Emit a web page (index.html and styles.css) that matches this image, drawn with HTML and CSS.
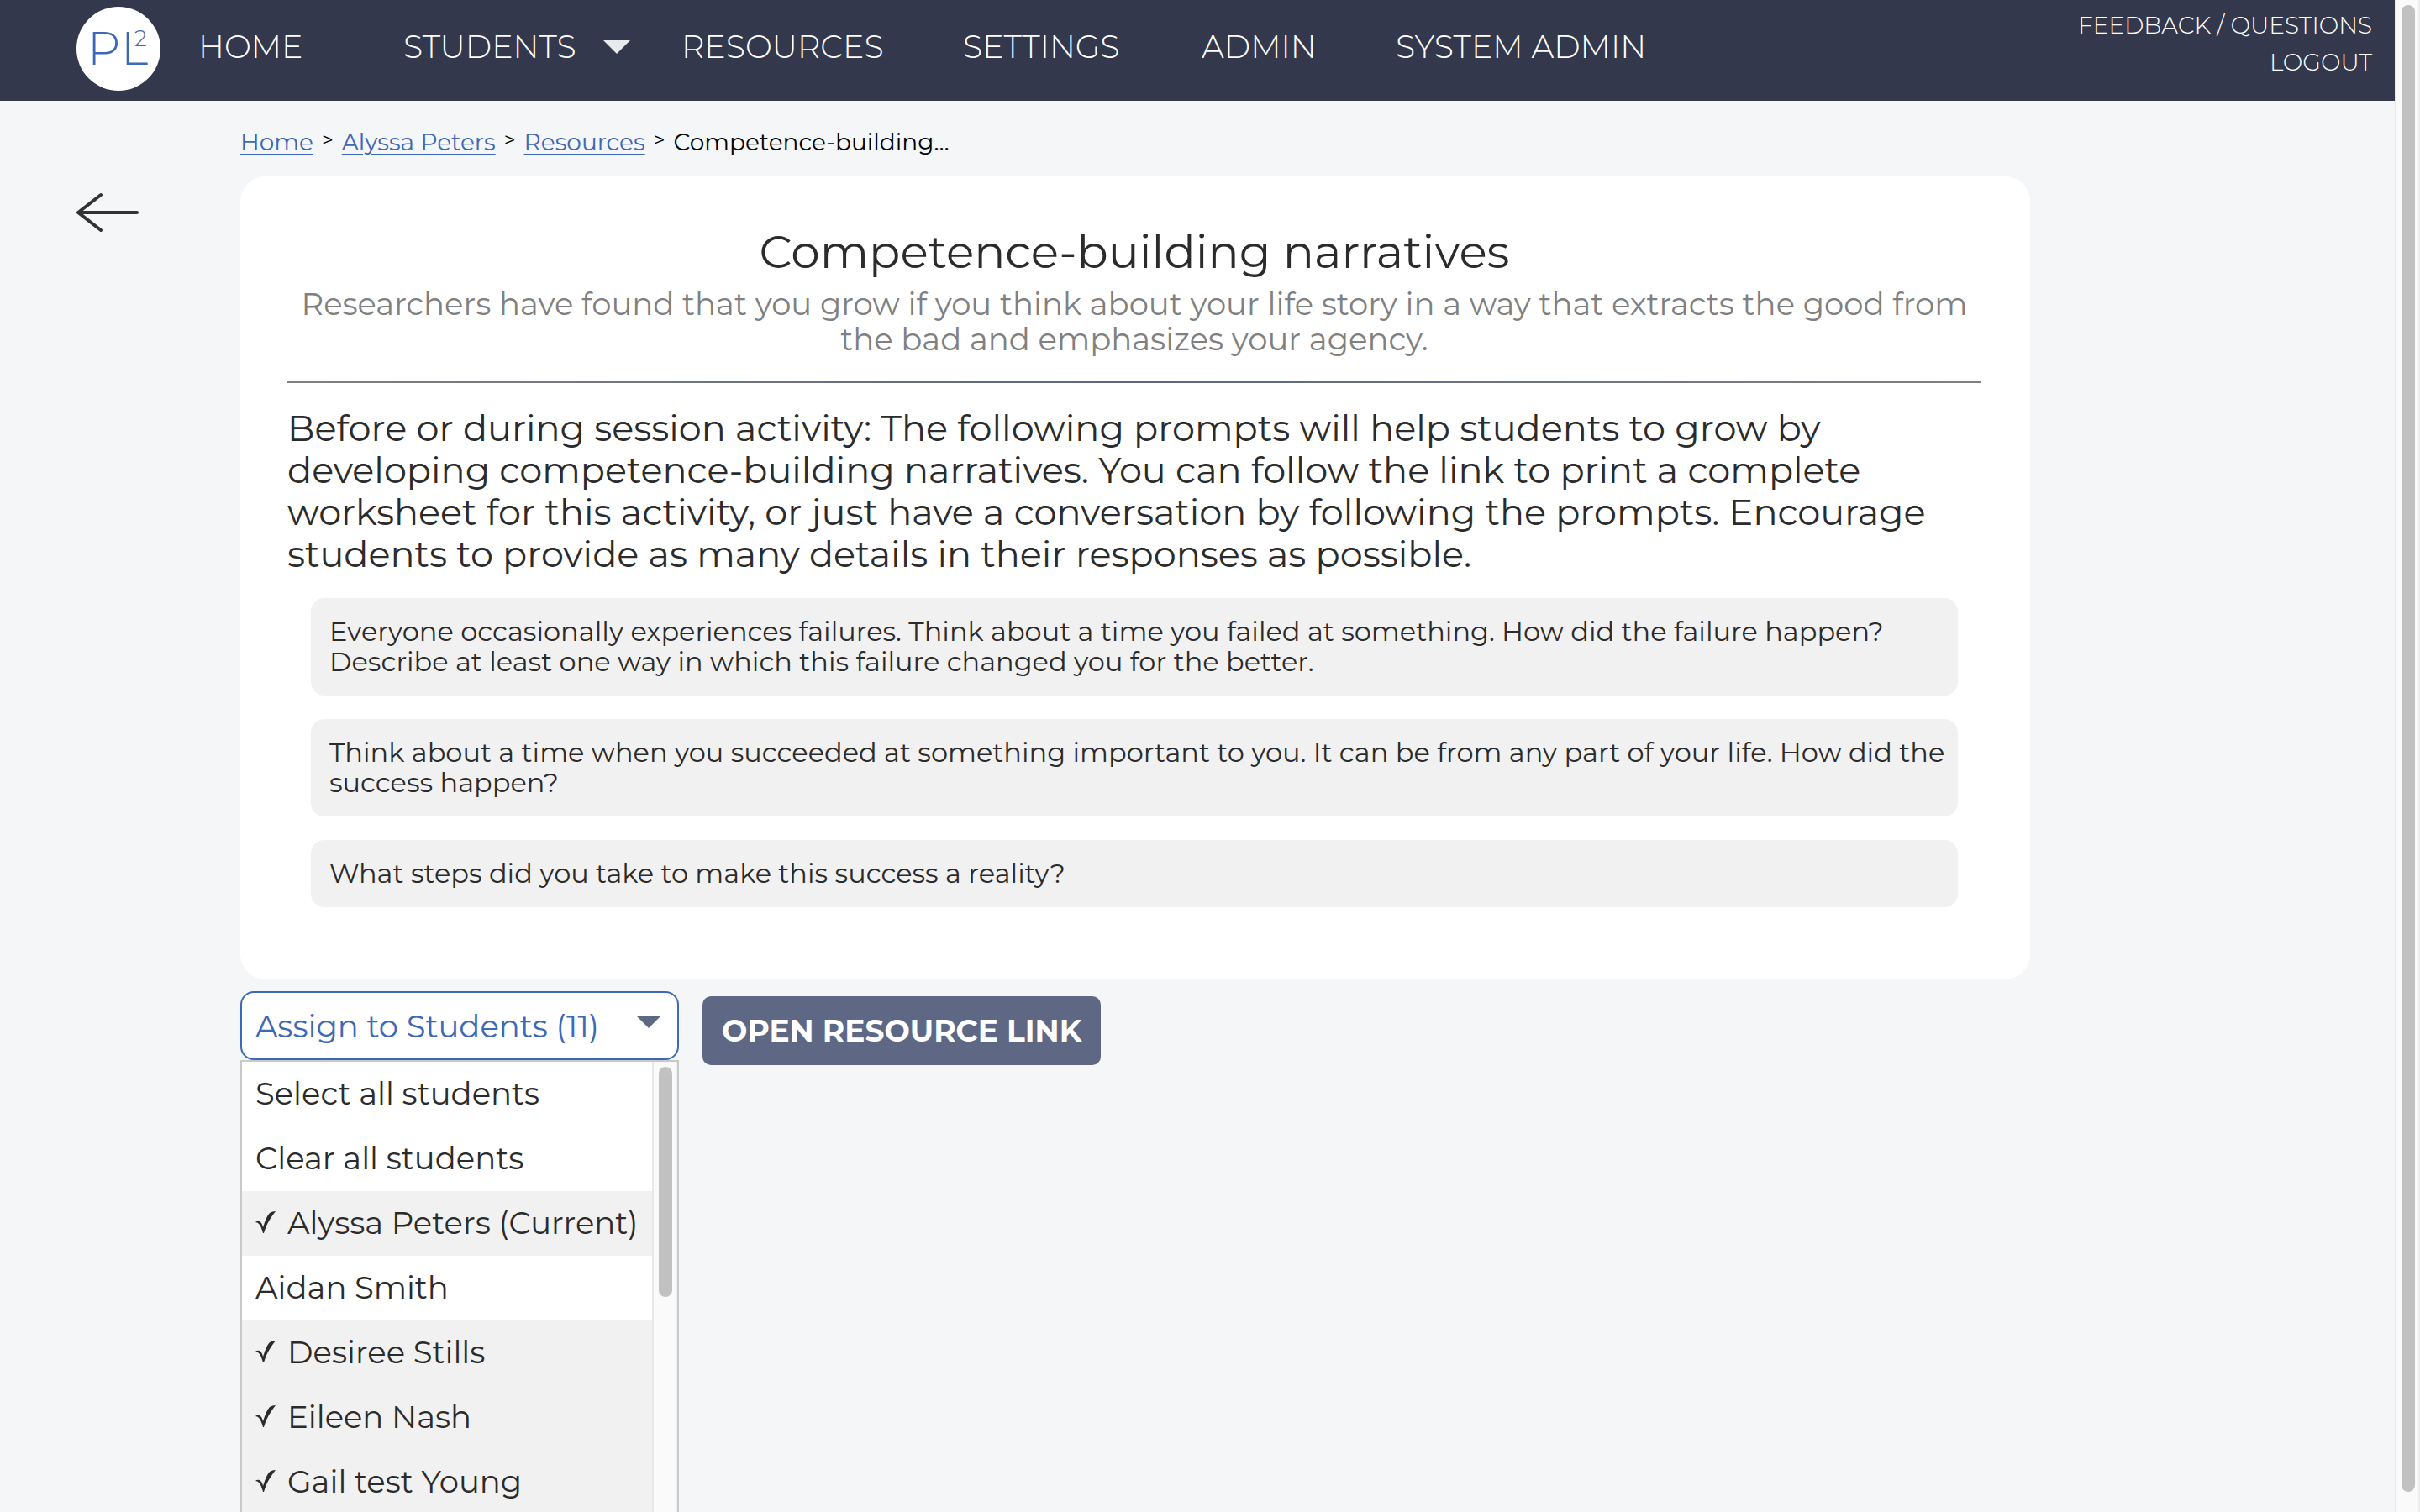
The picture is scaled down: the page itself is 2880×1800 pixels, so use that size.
FILE: index.html
```
<!DOCTYPE html>
<html lang="en">
<head>
<meta charset="utf-8">
<title>Competence-building narratives</title>
<link rel="stylesheet" href="styles.css">
</head>
<body>
<div class="page">
  <header class="topbar">
    <a class="logo" href="#" aria-label="PL2 home">
      <svg viewBox="0 0 100 100" width="100" height="100">
        <circle cx="50" cy="50" r="50" fill="#fff"/>
        <text class="logo-text" y="69"><tspan x="13">P</tspan><tspan x="53">L</tspan></text>
        <text class="logo-sup" x="69" y="47">2</text>
      </svg>
    </a>
    <nav class="nav">
      <a href="#">HOME</a>
      <a class="has-menu" href="#">STUDENTS
        <svg width="32" height="16" viewBox="0 0 32 16"><path d="M0 0h32L16 16z" fill="#e9eaec"/></svg>
      </a>
      <a href="#">RESOURCES</a>
      <a href="#">SETTINGS</a>
      <a href="#">ADMIN</a>
      <a href="#">SYSTEM ADMIN</a>
    </nav>
    <div class="account">
      <a href="#">FEEDBACK / QUESTIONS</a>
      <a href="#">LOGOUT</a>
    </div>
  </header>

  <main class="layout">
    <nav class="crumbs" aria-label="Breadcrumb">
      <a href="#">Home</a><span class="sep">&gt;</span>
      <a href="#">Alyssa Peters</a><span class="sep">&gt;</span>
      <a href="#">Resources</a><span class="sep">&gt;</span>
      <span>Competence-building…</span>
    </nav>
    <a class="back" href="#" aria-label="Back">
      <svg width="76" height="48" viewBox="0 0 76 48" fill="none" stroke="#333" stroke-width="4" stroke-linecap="round" stroke-linejoin="round"><path d="M72 24H2M29 3L2 24l27 21"/></svg>
    </a>
    <article class="card">
      <h1 class="title">Competence-building narratives</h1>
      <p class="summary">Researchers have found that you grow if you think about your life story in a way that extracts the good from the bad and emphasizes your agency.</p>
      <hr class="rule">
      <p class="intro">Before or during session activity: The following prompts will help students to grow by developing competence-building narratives. You can follow the link to print a complete worksheet for this activity, or just have a conversation by following the prompts. Encourage students to provide as many details in their responses as possible.</p>
      <div class="prompts">
        <p class="prompt">Everyone occasionally experiences failures. Think about a time you failed at something. How did the failure happen? Describe at least one way in which this failure changed you for the better.</p>
        <p class="prompt">Think about a time when you succeeded at something important to you. It can be from any part of your life. How did the success happen?</p>
        <p class="prompt">What steps did you take to make this success a reality?</p>
      </div>
    </article>
    <div class="actions">
      <div class="assign">
        <button class="assign-toggle" type="button" aria-expanded="true">Assign to Students (11)
          <svg width="28" height="14" viewBox="0 0 28 14"><path d="M0 0h28L14 14z" fill="#5e6884"/></svg>
        </button>
        <div class="menu">
          <div class="options">
            <button class="option" type="button">Select all students</button>
            <button class="option" type="button">Clear all students</button>
            <label class="option"><input class="tick" type="checkbox" checked>Alyssa Peters (Current)</label>
            <label class="option"><input class="tick" type="checkbox">Aidan Smith</label>
            <label class="option"><input class="tick" type="checkbox" checked>Desiree Stills</label>
            <label class="option"><input class="tick" type="checkbox" checked>Eileen Nash</label>
            <label class="option"><input class="tick" type="checkbox" checked>Gail test Young</label>
          </div>
          <div class="track menu-track"><div class="thumb"></div></div>
        </div>
      </div>
      <button class="open-link" type="button">OPEN RESOURCE LINK</button>
    </div>
  </main>
</div>
<div class="track page-track"><div class="thumb"></div></div>
</body>
</html>
```
FILE: styles.css
```
* { box-sizing: border-box; }

body {
  margin: 0;
  display: grid;
  grid-template-columns: minmax(0, 1fr) 30px;
  height: 100vh;
  overflow: hidden;
  background: #f4f6f8;
  color: #2b2b2b;
  font-family: Montserrat, Inter, sans-serif;
  font-size: 37px;
}

h1, p { margin: 0; font-weight: 400; }
button, input { font: inherit; color: inherit; margin: 0; }
svg { display: block; flex: none; }

/* Top bar */
.topbar {
  display: flex;
  align-items: flex-start;
  height: 120px;
  padding: 8px 27px 0 91px;
  background: #33384c;
}
.topbar a { color: #fff; text-decoration: none; }
.logo-text { font-size: 55px; font-weight: 300; fill: #3d68b8; }
.logo-sup { font-size: 26px; font-weight: 300; fill: #3d68b8; }
.nav {
  flex: 1;
  display: grid;
  grid-template-columns: 244px 331px 335px 284px 231px auto;
  margin-left: 45px;
  font-size: 38px;
  font-weight: 300;
  line-height: 96px;
  white-space: nowrap;
}
.has-menu { display: flex; align-items: center; gap: 32px; }
.account {
  display: flex;
  flex-direction: column;
  align-items: flex-end;
  font-size: 28px;
  font-weight: 300;
  line-height: 44px;
}

/* Content area */
.layout {
  display: grid;
  grid-template-columns: 286px minmax(0, 1fr) 434px;
}
.crumbs {
  grid-column: 2;
  display: flex;
  gap: 10px;
  padding: 27px 0 19px;
  font-size: 28px;
  line-height: 44px;
  color: #000;
}
.crumbs a {
  color: #3d68b8;
  text-decoration-thickness: 2px;
  text-underline-offset: 4px;
}
.sep { font-size: 24px; line-height: 40px; }
.back { grid-column: 1; padding: 19px 0 0 91px; }
.card {
  grid-column: 2;
  padding: 55px 58px 86px 56px;
  border-radius: 30px;
  background: #fff;
}
.title { font-size: 55px; line-height: 70px; text-align: center; }
.summary { padding-top: 6px; line-height: 42px; text-align: center; color: #808080; }
.rule {
  height: 2px;
  margin: 29px 0;
  border: 0;
  background: linear-gradient(90deg, #808080, #5e6884, #808080);
}
.intro { font-size: 43px; line-height: 50px; }
.prompts { display: grid; gap: 28px; padding: 27px 28px 0; }
.prompt {
  padding: 22px 0 22px 22px;
  border-radius: 16px;
  background: #f1f1f1;
  font-size: 32px;
  line-height: 36px;
}

/* Actions */
.actions {
  grid-column: 2;
  display: flex;
  gap: 28px;
  padding-top: 14px;
}
.assign { position: relative; width: 522px; }
.assign-toggle {
  display: flex;
  justify-content: space-between;
  align-items: center;
  width: 100%;
  height: 82px;
  padding: 0 20px 0 16px;
  border: 2px solid #3d68b8;
  border-radius: 16px;
  background: #fff;
  color: #3d68b8;
}
.assign-toggle svg { margin-bottom: 8px; }
.open-link {
  height: 82px;
  margin-top: 6px;
  padding: 0 23px;
  border: 0;
  border-radius: 10px;
  background: #5e6884;
  color: #fff;
  font-size: 36px;
  font-weight: 700;
}
.menu {
  position: absolute;
  top: 82px;
  left: 0;
  right: 0;
  display: grid;
  grid-template-columns: minmax(0, 1fr) 30px;
  height: 600px;
  border: 2px solid #c8c9cb;
  background: #fff;
}
.option {
  display: flex;
  align-items: center;
  gap: 14px;
  width: 100%;
  height: 77px;
  padding: 0 0 3px 16px;
  border: 0;
  background: #fff;
  white-space: nowrap;
}
.option:has(:checked) { background: #f1f1f1; }
.tick { display: none; appearance: none; }
.tick:checked {
  display: block;
  flex: none;
  width: 24px;
  height: 26px;
  background: #2b2b2b;
  clip-path: path("M0 13Q2 11 5 12Q8 14 9 19Q13 6 17 2Q20 0 24 0Q20 5 17 10Q13 16 10 26H9Q7 19 5 16Q3 13 0 13Z");
}

/* Scrollbars */
.track {
  padding: 6px;
  border-left: 2px solid #e8e8e8;
  border-right: 2px solid #ededed;
  background: #fafafa;
}
.thumb { width: 16px; border-radius: 8px; background: #c1c1c1; }
.page-track { padding-right: 4px; height: 100vh; }
.page-track .thumb { height: calc(100% - 18px); }
.menu-track .thumb { height: 274px; }
```
